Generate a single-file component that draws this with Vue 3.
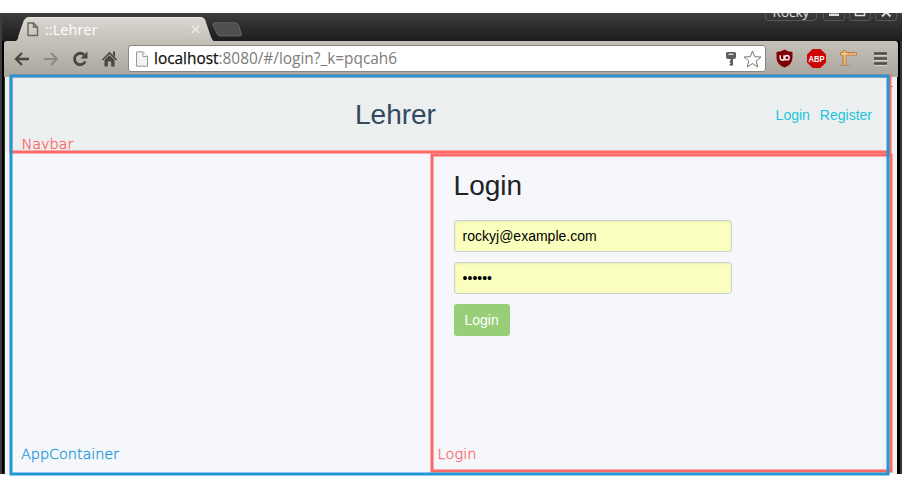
<script setup>
import { ref } from 'vue'

const email = ref('rockyj@example.com')
const password = ref('secret')
</script>

<template>
  <div class="screen">
    <div class="window">
      <header class="titlebar">
        <div class="tab">
          <svg class="tab-shape" width="206" height="25" viewBox="0 0 206 25">
            <defs>
              <linearGradient id="tabFill" x1="0" y1="0" x2="0" y2="1">
                <stop offset="0" stop-color="#dbd8d2" />
                <stop offset="1" stop-color="#c4bfb7" />
              </linearGradient>
            </defs>
            <path d="M0 25C6 25 7 24 8.500 20L14 4Q15.500 0 19 0H190Q194 0 195.500 4L201 20Q203 25 206 25Z" fill="url(#tabFill)" />
            <path d="M8.500 20L14 4Q15.500 .5 19 .5H190Q194 .5 195.500 4" fill="none" stroke="#eeece8" stroke-opacity=".7" />
          </svg>
          <svg class="tab-page" width="12" height="15" viewBox="0 0 12 15" fill="none" stroke="#666460" stroke-width="1.400">
            <path d="M1 1H6.500L10.500 5V13.500H1ZM6.500 1V5H10.500" />
          </svg>
          <span class="tab-title">::Lehrer</span>
          <svg class="tab-close" width="9" height="9" viewBox="0 0 9 9" stroke="#eeece8" stroke-width="1.500"><path d="M.7 .7L8.300 8.300M8.300 .7L.7 8.300" /></svg>
        </div>
        <svg class="new-tab" width="31" height="15" viewBox="0 0 31 15"><path d="M3 .7H23Q25.500 .7 26.500 3L29.500 12Q30 14 28 14H8Q6 14 5 12L1 3Q.4 .7 3 .7Z" fill="#505050" stroke="#707070" stroke-width=".7" /></svg>
        <div class="window-buttons">
          <span class="user">Rocky</span>
          <span class="wbtn"><svg width="20" height="18" viewBox="0 0 20 18"><path d="M5 11.500H15V14H5Z" fill="#ddd" /></svg></span>
          <span class="wbtn"><svg width="20" height="18" viewBox="0 0 20 18"><path d="M5.500 4V13.500H14.500V4Z" fill="none" stroke="#ddd" stroke-width="1.500" /></svg></span>
          <span class="wbtn"><svg width="20" height="18" viewBox="0 0 20 18"><path d="M6 6L14.500 14.500M14.500 6L6 14.500" stroke="#ddd" stroke-width="2" /></svg></span>
        </div>
      </header>

      <div class="toolbar">
        <div class="nav-icons">
          <svg width="16" height="16" viewBox="0 0 16 16" fill="none" stroke="#484744" stroke-width="2.300"><path d="M15 8H2.500M8 2L2 8L8 14" /></svg>
          <svg width="16" height="16" viewBox="0 0 16 16" fill="none" stroke="#8c8882" stroke-width="2"><path d="M1 8H13.500M8 2L14 8L8 14" /></svg>
          <svg width="16" height="16" viewBox="0 0 16 16"><path d="M12.300 4A5.700 5.700 0 1 0 13.300 10.500" fill="none" stroke="#484744" stroke-width="2.800" /><path d="M15.500 .5V7.500H8.500Z" fill="#484744" /></svg>
          <svg width="16" height="16" viewBox="0 0 16 16"><path d="M1.500 9L8.500 2L15.500 9" fill="none" stroke="#484744" stroke-width="1.600" /><path d="M12 .5H14V6L12 4ZM3.500 9L8.500 4.300L13.500 9V15.500H10.200V10.500H6.800V15.500H3.500Z" fill="#484744" /></svg>
        </div>
        <div class="omnibox">
          <svg class="url-page" width="12" height="16" viewBox="0 0 12 16" fill="#f3f3f3" stroke="#999" stroke-width="1"><path d="M.5 .8H7L11.500 5.500V15.200H.5Z" /><path d="M7 .8V5.500H11.500" fill="#fff" /></svg>
          <span class="url"><b>localhost</b>:8080/#/login?_k=pqcah6</span>
          <svg class="key" width="10" height="14" viewBox="0 0 10 14" fill="#5d5d5d"><path d="M1.500 0H8.500Q10 0 10 1.500V5Q10 7 8 7H7V13L5.500 14L3.500 13V12H4.500V10.500H3.500V9H4.500V7H2Q0 7 0 5V1.500Q0 0 1.500 0Z" /><path d="M2.500 2.300H7.500" stroke="#e4e4e4" stroke-width="1.300" /></svg>
          <svg class="star" width="19" height="18" viewBox="0 0 19 18"><path d="M9.500 1L11.700 6.700L18 7L13.200 11L14.800 17L9.500 13.600L4.200 17L5.800 11L1 7L7.300 6.700Z" fill="#fff" stroke="#777" /></svg>
        </div>
        <div class="extensions">
          <svg width="17" height="19" viewBox="0 0 17 19"><path d="M8.500 .5Q11.500 2.700 16.500 2.900V8.500Q16.500 15.500 8.500 18.500Q.5 15.500 .5 8.500V2.900Q5.500 2.700 8.500 .5Z" fill="#800005" /><path d="M4.200 6.300V9.500Q4.200 11 5.700 11H8V6.300" fill="none" stroke="#fff" stroke-width="1.300" /><circle cx="11" cy="8.700" r="2.200" fill="none" stroke="#fff" stroke-width="1.300" /></svg>
          <svg width="19" height="19" viewBox="0 0 19 19"><path d="M5.600 0H13.400L19 5.600V13.400L13.400 19H5.600L0 13.400V5.600Z" fill="#ce0505" /><text x="9.500" y="13" text-anchor="middle" textLength="16" lengthAdjust="spacingAndGlyphs" class="abp">ABP</text></svg>
          <svg width="17" height="17" viewBox="0 0 17 17"><path d="M0 15.500H11" stroke="#8c8379" opacity=".5" /><path d="M3 .8H6V2.500H16.500V5.200H6V15.200H3V5.200H.5V2.500H3Z" fill="#f3c488" stroke="#c07a38" stroke-width=".9" /><path d="M8.500 2.500V3.700M11 2.500V3.700M13.500 2.500V3.700M3 8H4.300M3 10.500H4.300M3 13H4.300" stroke="#b06a28" stroke-width=".8" /></svg>
          <svg class="menu" width="13" height="14" viewBox="0 0 13 14"><path d="M0 1.500H13M0 6.500H13M0 11.500H13" stroke="#4d4c49" stroke-width="2.600" /><path d="M0 3.500H13M0 8.500H13M0 13.500H13" stroke="#ddd9d2" stroke-width=".8" /></svg>
        </div>
      </div>

      <div class="viewport">
        <div class="page">
          <nav class="navbar">
            <h1 class="brand">Lehrer</h1>
            <div class="links"><a>Login</a><a>Register</a></div>
          </nav>
          <main class="content">
            <form class="login" @submit.prevent>
              <h2>Login</h2>
              <input v-model="email" type="text" />
              <input v-model="password" type="password" />
              <button type="submit">Login</button>
            </form>
          </main>
        </div>
        <div class="scrollbar"></div>
      </div>
    </div>

    <svg class="outlines" width="902" height="487" viewBox="0 0 902 487" fill="none" stroke-width="3">
      <path d="M886.500 86.500H893" stroke="#888" stroke-width="1" />
      <rect x="11" y="76" width="879" height="76" stroke="#ff6666" />
      <rect x="432" y="155" width="459" height="316" stroke="#ff6666" />
      <rect x="11" y="76" width="877" height="398" stroke="#2299d6" />
    </svg>
    <span class="label label-nav">Navbar</span>
    <span class="label label-app">AppContainer</span>
    <span class="label label-login">Login</span>
  </div>
</template>

<style>
body { margin: 0; background: #fff; overflow: hidden; }
</style>

<style scoped>
.screen { position: relative; box-sizing: border-box; width: 902px; height: 487px; padding-top: 13px; background: #fff; font-family: "Liberation Sans", Arial, sans-serif; }
.screen svg { display: block; flex: none; }
.window { box-sizing: border-box; height: 461px; display: flex; flex-direction: column; background: linear-gradient(90deg, #3c3c3c 0 2px, #000 2px 4px, #333 4px 5px, #000 5px 900px, #333 900px); overflow: hidden; }
.titlebar { height: 28px; flex: none; display: flex; background: linear-gradient(#3d3d3d, #1c1c1c); margin-left: 2px; }
.tab { position: relative; width: 206px; height: 25px; margin: 4px 0 0 8px; display: flex; align-items: center; box-sizing: border-box; padding-left: 17px; }
.tab-shape { position: absolute; left: 0; top: 0; }
.tab-page, .tab-title, .tab-close { position: relative; }
.tab-title { margin-left: 6px; width: 146px; font: 14.500px/24px "Open Sans", sans-serif; color: #fff; letter-spacing: .05px; }
.new-tab { margin: 9px 0 0 -4px; }
.window-buttons { margin-left: auto; padding-right: 5px; display: flex; gap: 4px; height: 20px; margin-top: -12px; }
.user { box-sizing: border-box; width: 52px; height: 20px; margin-right: 2px; border: 1px solid #595959; border-radius: 4px; color: #e2e2e2; font: 13.500px/21px "Open Sans", sans-serif; text-align: center; }
.wbtn { box-sizing: border-box; width: 22px; height: 20px; border: 1px solid #595959; border-radius: 3px; }
.toolbar { height: 36px; flex: none; box-sizing: border-box; margin: 0 4px; padding: 4px 11px 4px 10px; display: flex; align-items: flex-start; background: linear-gradient(#c5c0b8, #aaa59d); border-radius: 3px 3px 0 0; }
.nav-icons { display: flex; gap: 13px; width: 114px; padding-top: 6px; }
.omnibox { box-sizing: border-box; width: 638px; height: 27px; border: 1px solid #88857e; border-radius: 3px; background: #fff; display: flex; align-items: center; padding: 0 3px 0 7px; }
.url { margin-left: 6px; margin-right: auto; font: 15.400px/24px "Open Sans", sans-serif; color: #7c7c7c; white-space: nowrap; }
.url b { color: #111; font-weight: 400; -webkit-text-stroke: .25px #111; }
.key { margin-right: 7px; }
.extensions { margin-left: auto; display: flex; align-items: center; height: 27px; gap: 14px; }
.extensions .menu { margin-left: 3px; }
.abp { font: 700 9.500px "Liberation Sans", Arial, sans-serif; fill: #fff; }
.viewport { flex: 1; min-height: 0; display: flex; margin: 0 5px; }
.page { flex: 1; background: #f5f7fb; display: flex; flex-direction: column; }
.navbar { height: 75px; flex: none; background: #ebefef; display: grid; grid-template-columns: 350px 1fr auto; align-items: center; padding-right: 10px; }
.brand { grid-column: 2; margin: 0; font-size: 28px; line-height: 32px; font-weight: 400; color: #34495e; }
.links { display: flex; gap: 10px; font-size: 14px; color: #1bc5da; }
.content { flex: 1; display: grid; grid-template-columns: 427px 1fr; }
.login { grid-column: 2; padding: 17px 0 0 21.600px; display: flex; flex-direction: column; align-items: flex-start; gap: 10px; }
.login h2 { margin: 0 0 8px; font-size: 28px; line-height: 33px; font-weight: 400; color: #222; }
.login input { box-sizing: border-box; width: 278px; height: 32px; padding: 0 8px; border: 1px solid #ccd1d9; border-radius: 3px; background: #faffbd; color: #000; box-shadow: inset 0 1px 2px rgba(0, 0, 0, .08); font: 14px "Liberation Sans", Arial, sans-serif; }
.login button { width: 56px; height: 32px; padding: 0; border: 0; border-radius: 3px; background: #99ce78; color: #fff; font: 14px "Liberation Sans", Arial, sans-serif; }
.scrollbar { width: 15px; background: #f1f1f1; }
.outlines { position: absolute; left: 0; top: 0; pointer-events: none; }
.label { position: absolute; font: 200 14.500px/18px "DejaVu Sans", "DejaVu Sans Light", sans-serif; color: #ff6666; -webkit-text-stroke: .3px currentColor; letter-spacing: -.1px; }
.label-nav { left: 21.500px; top: 135px; }
.label-app { left: 21px; top: 445px; color: #2299d6; }
.label-login { left: 437.500px; top: 445px; letter-spacing: .1px; }
</style>
